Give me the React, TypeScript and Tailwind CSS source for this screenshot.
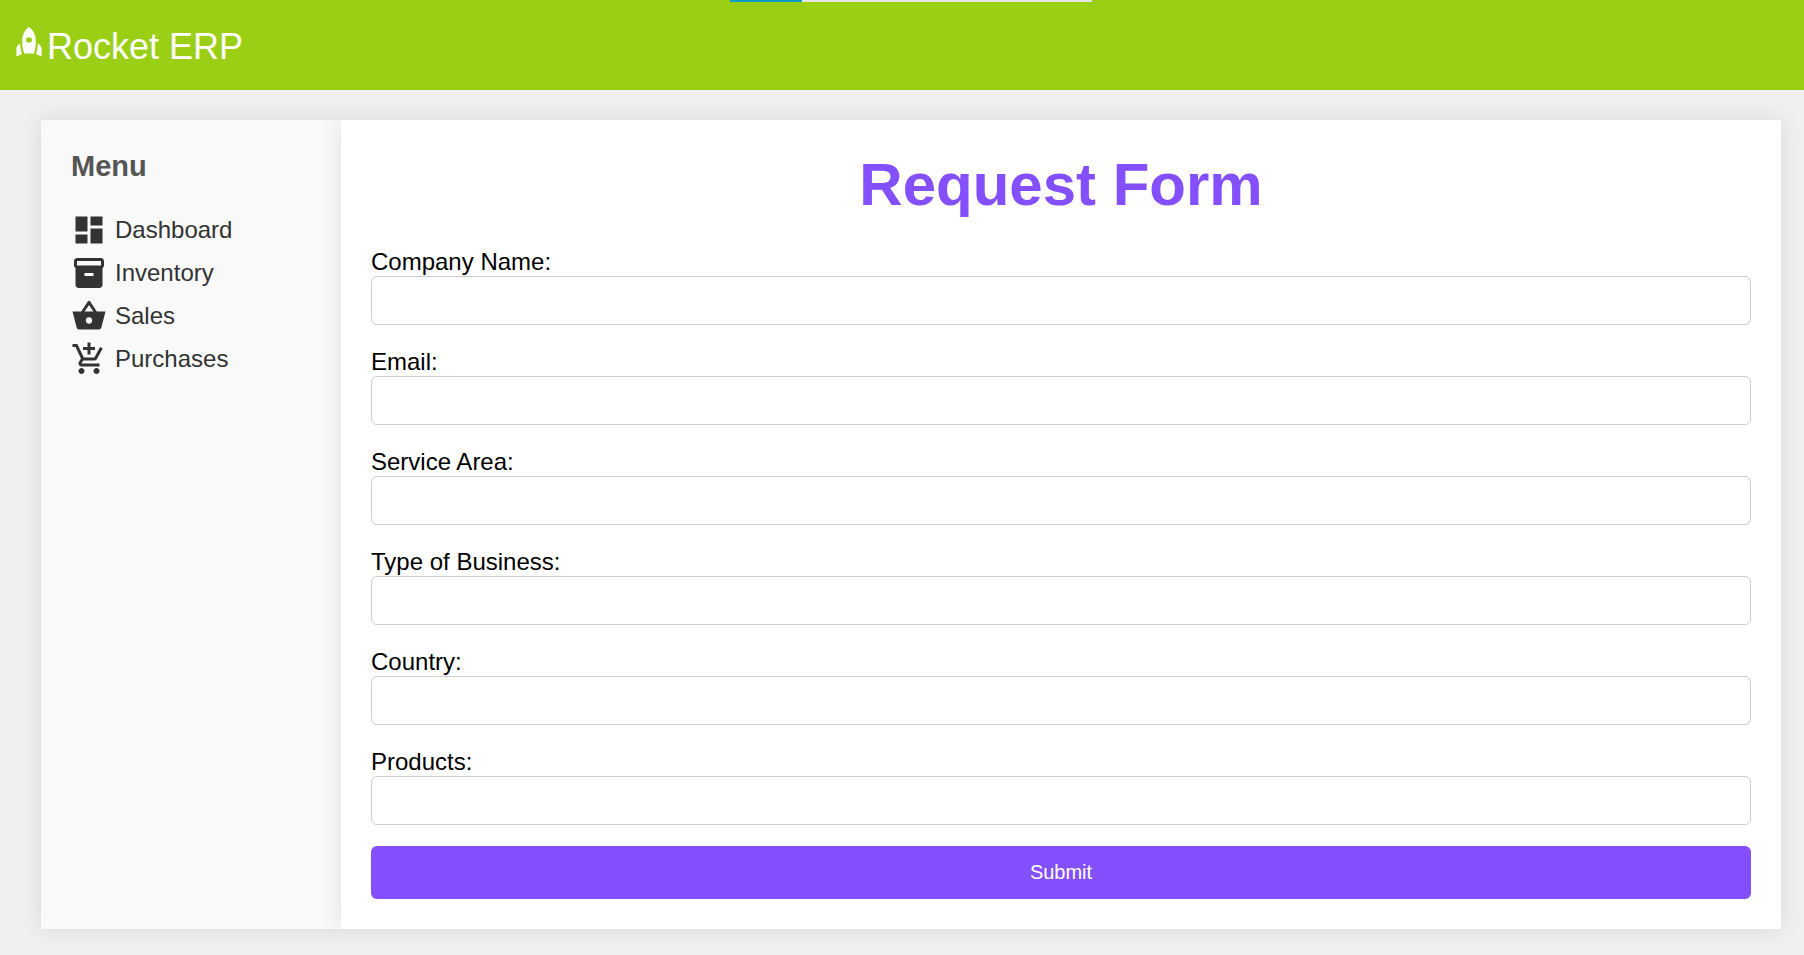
import { MdAddShoppingCart, MdDashboard, MdInventory2 } from "react-icons/md";

const fields = [
  { id: "company", label: "Company Name:" },
  { id: "email", label: "Email:" },
  { id: "area", label: "Service Area:" },
  { id: "business", label: "Type of Business:" },
  { id: "country", label: "Country:" },
  { id: "products", label: "Products:" },
];

function BasketIcon() {
  return (
    <svg viewBox="0 0 24 24" fill="currentColor" className="size-9" aria-hidden="true">
      <path
        fillRule="evenodd"
        d="M1 9h5.800L11.200 2.300q.8-1 1.600 0L17.200 9H23l-2.800 10.800q-.3 1.200-1.500 1.200H5.300q-1.200 0-1.500-1.200zM9.100 9h5.800L12 4.600zM12 12.900a2.100 2.100 0 1 0 0 4.200 2.100 2.100 0 0 0 0-4.200z"
      />
    </svg>
  );
}

function RocketIcon() {
  return (
    <svg viewBox="0 0 26 30" fill="currentColor" className="h-[30px] w-[26px]" aria-hidden="true">
      <path
        fillRule="evenodd"
        d="M13 0C8.800 2.800 6.200 8 6.200 14.500c0 4.500.6 8.500 2 12h9.600c1.400-3.500 2-7.500 2-12C19.800 8 17.200 2.800 13 0zM13 10.200a3 2.700 0 1 1 0 5.400 3 2.700 0 0 1 0-5.400z"
      />
      <path d="M4.300 16.400C2.200 17.600.4 19.200.4 21.500v8l5.600-2.600C4.700 23.500 4.200 20 4.300 16.400zM21.700 16.400c2.100 1.200 3.900 2.800 3.900 5.100v8L20 26.900c1.300-3.400 1.800-6.900 1.700-10.500z" />
    </svg>
  );
}

const menu = [
  { label: "Dashboard", icon: <MdDashboard className="size-9" /> },
  { label: "Inventory", icon: <MdInventory2 className="size-9" /> },
  { label: "Sales", icon: <BasketIcon /> },
  { label: "Purchases", icon: <MdAddShoppingCart className="size-9" /> },
];

export default function App() {
  return (
    <div className="relative min-h-screen bg-[#f0f0f0] pb-6 font-['Liberation_Sans',Arial,sans-serif] text-2xl text-black">
      <div className="absolute top-0 left-[730px] flex h-0.5 w-[362px] bg-[#e5e5e5]">
        <div className="w-[72px] bg-[#0a9fc4]" />
      </div>
      <header className="flex h-[90px] items-center bg-[#9bcf15] px-4 pt-1 text-4xl text-white">
        <a href="#" className="flex items-start">
          <RocketIcon />
          <span className="pl-[5px]">Rocket ERP</span>
        </a>
      </header>
      <div className="mt-[30px] mr-[23px] ml-[41px] flex overflow-hidden bg-white shadow-[0_0_22px_rgba(0,0,0,0.1)]">
        <nav className="w-[300px] shrink-0 bg-[#f9f9f9] p-[30px] text-[#333]">
          <h2 className="text-[29px] leading-8 font-bold text-[#555]">Menu</h2>
          <ul className="mt-[30px] flex flex-col gap-[7px]">
            {menu.map((item) => (
              <li key={item.label}>
                <a href="#" className="flex items-center gap-2 leading-9">
                  {item.icon}
                  {item.label}
                </a>
              </li>
            ))}
          </ul>
        </nav>
        <main className="min-w-0 flex-1 p-[30px] shadow-[0_0_22px_rgba(0,0,0,0.1)]">
          <h1 className="text-center text-6xl leading-[70px] font-bold text-[#8450ff]">Request Form</h1>
          <form className="mt-[27px]">
            <div className="mb-[21px] flex flex-col gap-[22px]">
              {fields.map((field) => (
                <div key={field.id}>
                  <label htmlFor={field.id} className="block leading-[29px]">
                    {field.label}
                  </label>
                  <input
                    id={field.id}
                    type="text"
                    className="block h-[49px] w-full rounded-md border border-[#ccc] bg-white px-3"
                  />
                </div>
              ))}
            </div>
            <button type="submit" className="block h-[53px] w-full rounded-md bg-[#8450ff] pb-0.5 text-xl text-white">
              Submit
            </button>
          </form>
        </main>
      </div>
    </div>
  );
}
